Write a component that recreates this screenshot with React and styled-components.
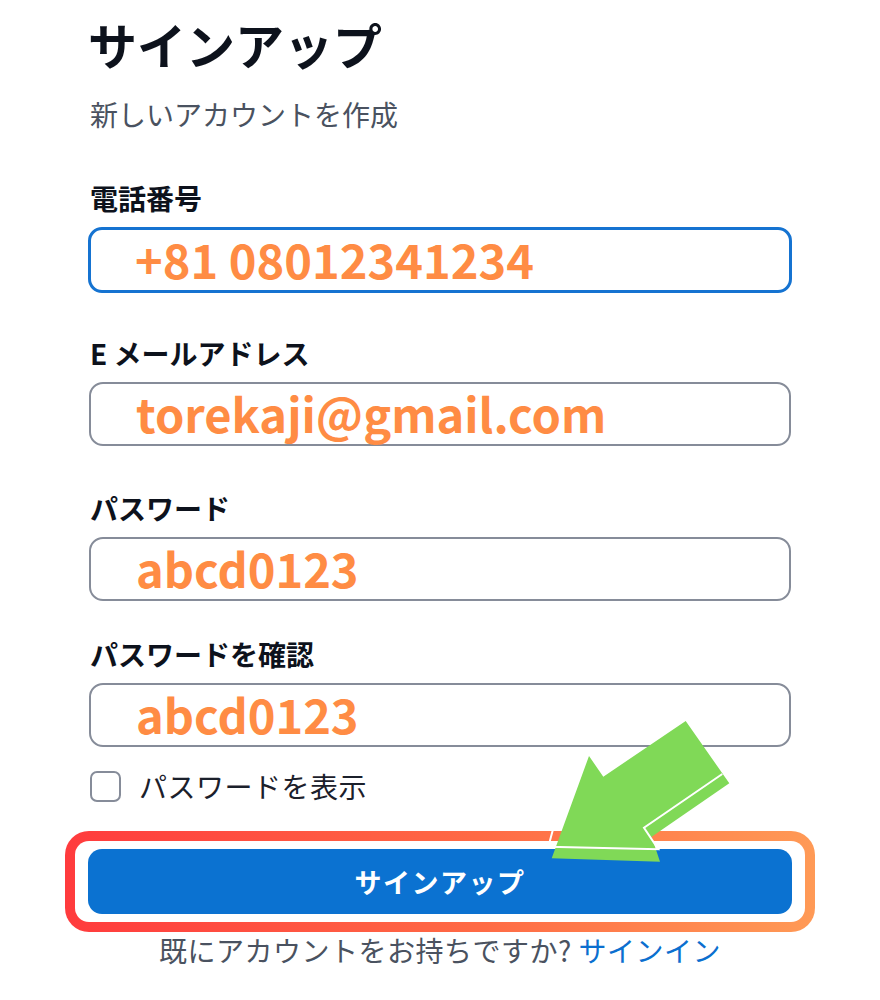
import React from 'react';
import styled, { createGlobalStyle } from 'styled-components';

const GlobalStyle = createGlobalStyle`
  html, body {
    margin: 0;
    padding: 0;
    background: #ffffff;
  }
  body {
    font-family: "Noto Sans CJK JP", "Noto Sans", sans-serif;
    color: #0f1420;
  }
`;

const Page = styled.div`
  position: relative;
  width: 880px;
  height: 1000px;
  box-sizing: border-box;
  padding: 16px 88px 0;
  overflow: hidden;
`;

const Title = styled.h1`
  margin: 0;
  font-size: 49px;
  line-height: 56px;
  font-weight: 700;
  color: #0d121c;
`;

const Subtitle = styled.p`
  margin: 24px 0 0 2px;
  font-size: 28px;
  line-height: 36px;
  color: #4a5260;
`;

const Field = styled.div`
  margin-top: ${(p) => p.$top}px;
  display: flex;
  flex-direction: column;
  gap: 11px;
`;

const Label = styled.label`
  padding-left: 2px;
  font-size: 28px;
  line-height: 36px;
  font-weight: 700;
  color: #0d121c;
`;

const InputBox = styled.div`
  box-sizing: border-box;
  height: ${(p) => (p.$focused ? 66 : 64)}px;
  margin: 0 ${(p) => (p.$focused ? 0 : 1)}px;
  border: ${(p) => (p.$focused ? '3px solid #1573d1' : '2px solid #868c99')};
  border-radius: 14px;
  display: flex;
  align-items: center;
  padding: 0 0 3px ${(p) => (p.$focused ? 44 : 45)}px;
  font-size: 47px;
  font-weight: 700;
  color: #ff8c44;
  white-space: nowrap;
`;

const CheckRow = styled.div`
  margin: 21px 0 0 2px;
  display: flex;
  align-items: center;
  gap: 18px;
  font-size: 28px;
  line-height: 36px;
  letter-spacing: 0.5px;
  color: #1b202b;
`;

const CheckBox = styled.span`
  box-sizing: border-box;
  width: 31px;
  height: 31px;
  border: 2px solid #868c99;
  border-radius: 7px;
`;

const Highlight = styled.div`
  margin: 27px -23px 0;
  padding: 10px;
  border-radius: 24px;
  background: linear-gradient(90deg, #ff3b3d 0%, #ff6a45 55%, #ff9a56 100%);
`;

const HighlightInner = styled.div`
  background: #ffffff;
  border-radius: 14px;
  padding: 8px 13px 8px;
`;

const PrimaryButton = styled.button`
  width: 100%;
  height: 65px;
  border: none;
  border-radius: 14px;
  background: #0b72d1;
  color: #ffffff;
  font-family: inherit;
  font-size: 27px;
  font-weight: 700;
  letter-spacing: 1.5px;
  cursor: pointer;
`;

const Footer = styled.p`
  margin: 0;
  text-align: center;
  font-size: 28px;
  line-height: 36px;
  letter-spacing: 0.5px;
  color: #4a5260;
`;

const Link = styled.a`
  color: #0b6fcf;
  text-decoration: none;
`;

const Arrow = styled.svg`
  position: absolute;
  left: 540px;
  top: 710px;
  width: 200px;
  height: 160px;
  pointer-events: none;
`;

const fields = [
  { label: '電話番号', value: '+81 08012341234', top: 48, focused: true },
  { label: 'E メールアドレス', value: 'torekaji@gmail.com', top: 42 },
  { label: 'パスワード', value: 'abcd0123', top: 44 },
  { label: 'パスワードを確認', value: 'abcd0123', top: 35 },
];

export default function App() {
  return (
    <>
      <GlobalStyle />
      <Page>
        <Title>サインアップ</Title>
        <Subtitle>新しいアカウントを作成</Subtitle>

        {fields.map((f) => (
          <Field key={f.label} $top={f.top}>
            <Label>{f.label}</Label>
            <InputBox $focused={f.focused}>{f.value}</InputBox>
          </Field>
        ))}

        <CheckRow>
          <CheckBox />
          パスワードを表示
        </CheckRow>

        <Highlight>
          <HighlightInner>
            <PrimaryButton>サインアップ</PrimaryButton>
          </HighlightInner>
        </Highlight>

        <Footer>
          既にアカウントをお持ちですか? <Link href="#">サインイン</Link>
        </Footer>

        {/* annotation arrow pointing at the button */}
        <Arrow viewBox="540 710 200 160">
          <polygon
            points="685.7,721 729.3,783.3 651.7,836.7 660,861.7 551.7,858.3 589,756 603.3,776.7"
            fill="#80d957"
          />
          <polyline
            points="722.3,774 644,827.7 658.3,849.3 548.3,846.7 553.3,828.3"
            fill="none"
            stroke="#ffffff"
            strokeWidth="2"
          />
        </Arrow>
      </Page>
    </>
  );
}
